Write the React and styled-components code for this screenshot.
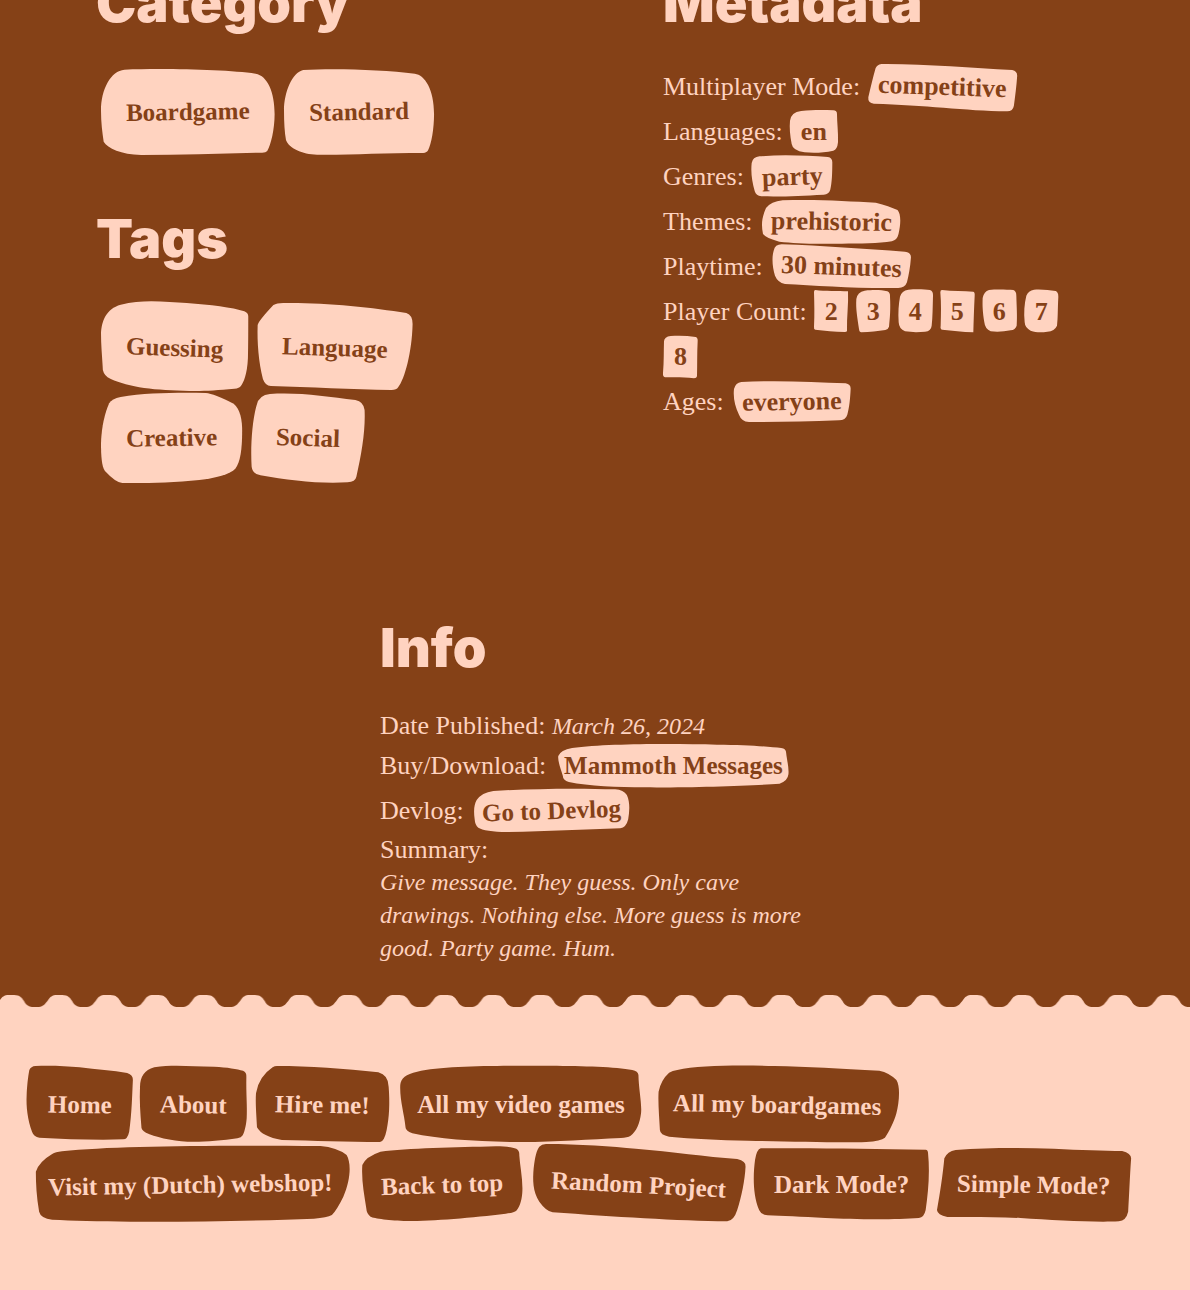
import React from "react";
import styled, { createGlobalStyle, ThemeProvider } from "styled-components";

const theme = {
  earth: "#854117",
  skin: "#ffd3c0",
  body: '"Liberation Serif", "Times New Roman", serif',
  display: 'Inter, "Liberation Sans", sans-serif',
};

const GlobalStyle = createGlobalStyle`
  *, *::before, *::after { box-sizing: border-box; }
  body {
    margin: 0;
    background: ${theme.skin};
    color: ${theme.skin};
    font-family: ${theme.body};
    font-size: 26px;
    line-height: 33px;
  }
  p { margin: 0; }
`;

/* Hand-cut stone outlines; each one stretches with the label it carries. */
const stones = {
  boardgame: ["0 -6 519 264", "M70 2 C190 -3 380 2 462 14 C498 20 519 70 519 135 C519 180 508 228 497 246 Q493 251 482 251 C360 253 240 258 120 258 C60 256 20 238 8 218 C4 190 0 160 0 125 C0 60 30 5 70 2Z"],
  standard: ["0 -6 453 264", "M58 3 C150 -3 300 2 395 14 C425 18 453 60 453 135 C453 180 445 225 435 244 Q432 251 420 252 C300 252 200 258 100 257 C55 256 15 238 6 213 C2 190 0 160 0 125 C0 70 25 10 58 3Z"],
  guessing: ["0 5 447 264", "M60 10 C130 -8 200 2 260 5 C330 10 400 18 435 30 Q447 35 447 45 C447 90 447 130 446 170 C444 220 432 245 425 253 Q420 261 405 262 C340 268 300 270 250 268 C150 267 70 255 20 228 Q4 216 5 195 C3 160 0 130 0 95 C2 60 15 22 60 10Z"],
  language: ["0 2 474 264", "M50 8 Q60 2 80 2 C200 0 350 15 455 32 Q474 38 474 65 C472 150 450 230 430 255 Q425 263 410 263 C290 262 160 254 42 251 Q25 250 18 230 C5 180 0 120 2 68 Q5 55 50 8Z"],
  creative: ["0 1 431 264", "M60 13 C140 0 230 0 320 1 Q345 3 405 33 C425 50 431 80 431 115 C431 170 425 210 410 228 C395 245 350 255 300 262 C220 270 130 272 65 271 Q45 270 12 235 C2 220 0 190 0 150 C2 100 12 60 25 32 Q33 18 60 13Z"],
  social: ["0 -1 360 264", "M60 2 C150 -4 240 10 330 20 Q356 25 359 50 C362 110 350 180 333 250 Q330 265 305 267 C220 272 120 262 30 246 Q5 242 2 220 C-2 160 4 80 18 35 Q25 5 60 2Z"],
  competitive: ["654 198 457 129", "M698 195 C830 194 970 207 1095 213 Q1110 216 1110 230 C1108 260 1104 290 1100 320 Q1097 337 1080 337 C950 335 830 318 675 314 Q656 312 658 295 C665 265 672 235 680 208 Q684 197 698 195Z"],
  en: ["422 333 142 129", "M455 336 C490 332 520 332 550 334 Q561 334 561 345 C561 370 565 400 564 430 Q562 452 550 455 C520 462 490 462 465 460 Q430 455 427 435 C422 410 420 385 422 365 Q425 340 455 336Z"],
  party: ["305 466 242 129", "M330 470 C400 464 470 468 530 472 Q543 474 543 488 C543 520 542 550 537 570 Q533 584 518 585 C450 588 400 592 335 590 Q320 588 316 575 C308 545 304 520 307 490 Q310 472 330 470Z"],
  prehistoric: ["332 598 429 129", "M400 599 C500 595 600 602 680 606 Q720 616 745 628 C756 640 755 670 748 700 Q744 718 728 722 C680 730 600 729 540 729 C480 730 430 727 390 723 Q350 712 341 700 C335 670 338 650 350 622 Q365 603 400 599Z"],
  minutes: ["365 73 428 129", "M400 71 C520 75 650 85 770 93 Q788 95 788 110 C786 140 781 165 776 185 Q770 202 750 202 C630 204 500 195 410 190 Q388 185 380 165 C372 140 370 110 376 90 Q380 71 400 71Z"],
  two: ["498 208 105 129", "M502 208 C530 212 570 210 600 212 C602 250 596 290 597 330 Q597 334 590 334 C560 334 530 330 502 327 Q497 326 498 318 C500 280 499 250 498 214 Q498 208 502 208Z"],
  three: ["624 208 105 129", "M650 210 C680 207 700 208 718 212 Q727 216 726 228 C728 265 726 290 723 318 Q720 327 712 328 C690 331 665 335 640 335 Q634 335 633 325 C628 290 623 265 625 235 Q628 214 650 210Z"],
  four: ["749 208 105 129", "M780 207 C805 205 830 206 845 208 Q855 212 854 225 C853 260 853 290 850 315 Q848 332 830 333 C810 335 790 335 770 332 Q752 325 751 305 C749 275 751 250 755 228 Q760 210 780 207Z"],
  five: ["878 208 105 129", "M884 208 C915 212 950 211 978 213 Q983 214 982 225 C980 265 979 300 978 335 C945 334 915 330 885 327 Q878 326 880 315 C881 280 882 250 879 215 Q879 208 884 208Z"],
  six: ["1004 208 105 129", "M1025 208 C1050 205 1080 207 1098 208 Q1107 211 1107 225 C1108 260 1110 285 1108 315 Q1104 327 1090 329 C1070 333 1050 335 1030 332 Q1013 325 1011 305 C1006 275 1005 255 1006 232 Q1010 212 1025 208Z"],
  seven: ["1130 208 105 129", "M1160 207 C1185 205 1205 209 1225 211 Q1233 214 1233 228 C1231 265 1232 290 1229 315 Q1222 331 1200 333 C1180 336 1165 335 1150 330 Q1133 322 1132 305 C1129 275 1131 250 1137 225 Q1143 210 1160 207Z"],
  eight: ["42 341 105 129", "M65 344 C90 343 115 343 140 347 Q147 349 146 360 C144 395 145 430 144 465 Q143 471 135 471 C105 467 80 468 48 468 Q41 466 42 455 C45 420 44 390 45 360 Q46 346 65 344Z"],
  everyone: ["231 476 365 129", "M262 482 C370 476 480 482 575 486 Q591 489 590 503 C589 530 586 560 580 580 Q575 597 555 597 C460 601 370 602 285 602 Q262 600 255 580 C243 555 237 530 240 503 Q245 484 262 482Z"],
  mammoth: ["582 404 731 129", "M640 416 C750 402 950 403 1080 406 C1170 406 1240 412 1275 416 Q1290 418 1290 430 C1292 450 1299 475 1297 495 Q1295 515 1270 523 C1180 530 1000 535 860 534 C780 534 690 530 630 518 Q612 512 612 500 C606 480 596 455 598 440 Q605 422 640 416Z"],
  devlog: ["323 539 482 129", "M390 545 C500 538 640 536 755 540 Q780 542 790 557 C800 580 798 605 794 630 Q788 655 770 657 C660 660 550 667 430 668 C390 668 355 662 345 655 Q335 648 334 630 C330 600 333 585 340 572 Q355 550 390 545Z"],
  home: ["86 258 310 228", "M108 258 C150 256 200 258 240 262 C290 268 340 272 382 279 Q400 285 399 300 C397 340 396 400 388 455 Q383 478 370 478 C290 481 200 477 120 473 Q103 470 98 455 C85 420 80 380 82 345 C83 320 86 290 90 270 Q95 259 108 258Z"],
  about: ["417 258 321 228", "M460 262 C520 253 570 260 640 260 C680 262 710 267 727 272 Q738 277 737 290 C736 340 740 380 738 415 C736 440 730 460 726 466 Q722 473 710 475 C660 482 600 487 560 485 C510 482 460 470 435 458 Q420 450 421 438 C418 400 415 360 417 320 C418 290 430 270 460 262Z"],
  hire: ["759 258 405 228", "M825 258 C920 258 1030 266 1130 277 Q1160 285 1161 320 C1165 370 1163 410 1155 450 Q1148 485 1135 486 C1040 486 930 482 840 480 Q780 470 765 442 C763 400 760 370 762 340 Q770 290 812 262 Q818 258 825 258Z"],
  video: ["48 48 760 228", "M110 65 C200 45 400 48 520 47 C620 48 720 50 770 60 Q788 63 789 75 C790 120 800 160 797 190 C793 220 783 245 765 257 Q755 263 735 264 C640 268 540 276 430 276 C300 276 180 268 95 250 Q73 242 74 230 C70 190 56 150 58 105 C60 85 75 72 110 65Z"],
  boardgames: ["831 48 756 228", "M905 60 C970 45 1100 45 1200 48 C1300 50 1400 56 1520 62 Q1550 68 1572 90 C1585 110 1580 160 1572 190 C1565 215 1550 245 1537 263 Q1525 273 1480 276 C1400 279 1250 274 1120 272 C1030 270 950 266 880 260 Q853 255 852 240 C850 200 846 160 848 125 Q855 90 880 68 Q890 62 905 60Z"],
  webshop: ["86 498 992 228", "M190 514 C350 498 600 496 980 498 Q1030 502 1060 525 C1075 550 1072 600 1050 650 Q1030 690 1015 705 Q1000 713 960 716 C800 722 600 726 400 725 C300 724 220 722 160 719 Q125 715 120 695 C112 650 110 610 110 575 Q120 545 160 522 Q170 516 190 514Z"],
  back: ["-39 288 492 228", "M20 305 C100 295 250 292 370 289 C400 289 420 292 432 296 Q442 302 441 315 C443 350 453 390 450 430 C448 455 440 475 432 482 Q425 488 400 491 C300 503 180 513 100 513 C50 512 0 505 -10 500 Q-22 492 -23 475 C-30 430 -38 390 -35 345 Q-25 320 20 305Z"],
  random: ["475 288 647 228", "M520 282 C620 282 720 290 790 296 C900 305 1000 320 1095 327 Q1122 333 1120 350 C1118 390 1108 440 1095 480 Q1085 512 1065 514 C920 513 720 500 540 487 Q520 483 500 455 C480 425 480 390 483 355 C487 320 492 300 500 290 Q507 282 520 282Z"],
  dark: ["10 288 516 228", "M30 295 C200 293 350 297 515 299 Q522 300 522 310 C528 370 522 430 515 480 Q510 503 495 504 C420 510 300 508 220 504 C150 500 90 498 50 496 Q30 493 25 480 C5 430 8 370 13 330 Q18 298 30 295Z"],
  simple: ["549 288 581 228", "M605 300 C700 293 800 293 900 296 C980 300 1050 302 1105 303 Q1132 310 1132 325 C1128 380 1126 440 1123 485 Q1117 512 1095 514 C1020 518 900 510 800 504 C720 500 640 501 580 501 Q550 495 549 480 C558 430 567 370 571 325 Q580 304 605 300Z"],
};

const Page = styled.div`
  display: flex;
  flex-direction: column;
  min-height: 100vh;
`;

const Main = styled.main`
  flex: 0 0 auto;
  display: flex;
  flex-direction: column;
  gap: 139px;
  margin-top: -23px;
  padding: 0 96px 29px;
  background: ${(p) => p.theme.earth};

  @media (max-width: 700px) {
    padding-inline: 24px;
    gap: 56px;
  }
`;

const Columns = styled.div`
  display: grid;
  grid-template-columns: repeat(2, minmax(0, 431px));
  justify-content: space-between;
  gap: 56px;

  @media (max-width: 1000px) {
    grid-template-columns: minmax(0, 431px);
    justify-content: center;
  }
`;

const Column = styled.div`
  display: flex;
  flex-direction: column;
  gap: 56px;
`;

const Section = styled.section`
  width: 100%;
  max-width: 430px;
  align-self: ${(p) => (p.$centered ? "center" : "auto")};
`;

const Heading = styled.h2`
  margin: 0 0 35px;
  font-family: ${(p) => p.theme.display};
  font-size: 54px;
  font-weight: 900;
  line-height: 52px;
`;

const StoneWall = styled.div`
  display: flex;
  flex-wrap: wrap;
  gap: 2px 9px;
  padding: 3px 5px 2px;
`;

const Row = styled.div`
  display: flex;
  flex-wrap: wrap;
  align-items: center;
  column-gap: 7px;
  line-height: 45px;
`;

const sizes = {
  large: { height: 88, pad: 25, font: 25 },
  medium: { height: 76, pad: 20, font: 25 },
  small: { height: 43, pad: 11, font: 25 },
  chip: { height: 43, pad: 11, font: 26 },
};

const StoneBox = styled.span`
  position: relative;
  display: inline-flex;
  align-items: center;
  justify-content: center;
  height: ${(p) => sizes[p.$size].height}px;
  margin: ${(p) => (sizes[p.$size].height === 43 ? "1px 0" : "0")};
  padding: 0 ${(p) => sizes[p.$size].pad}px;
  border: 0;
  background: none;
  color: ${(p) => (p.$dark ? p.theme.skin : p.theme.earth)};
  font-family: inherit;
  font-size: ${(p) => sizes[p.$size].font}px;
  font-weight: 700;
  line-height: 33px;
  text-decoration: none;
  white-space: nowrap;
`;

const Outline = styled.svg`
  position: absolute;
  inset: 0;
  width: 100%;
  height: 100%;
  overflow: visible;
  fill: ${(p) => (p.$dark ? p.theme.earth : p.theme.skin)};
`;

const Label = styled.span`
  position: relative;
  transform: rotate(${(p) => p.$tilt}deg);
`;

function Stone({ shape, tilt = 0, size = "chip", dark = false, as = "span", href, children }) {
  const [viewBox, d] = stones[shape];
  const extra = as === "a" ? { href } : as === "button" ? { type: "button" } : {};
  return (
    <StoneBox as={as} $size={size} $dark={dark} {...extra}>
      <Outline $dark={dark} viewBox={viewBox} preserveAspectRatio="none" aria-hidden="true">
        <path d={d} />
      </Outline>
      <Label $tilt={tilt}>{children}</Label>
    </StoneBox>
  );
}

const Emphasis = styled.em`
  font-size: 24px;
`;

const Summary = styled.p`
  font-size: 24px;
  font-style: italic;
`;

const WaveEdge = styled.svg`
  display: block;
  width: 100%;
  height: 14px;
  background: ${(p) => p.theme.earth};
`;

const Footer = styled.footer`
  background: ${(p) => p.theme.skin};
`;

const FooterNav = styled.nav`
  display: flex;
  flex-wrap: wrap;
  gap: 4px 8px;
  padding: 58px 28px 68px;
`;

function Waves() {
  return (
    <WaveEdge aria-hidden="true">
      <defs>
        <pattern id="waves" width="48.15" height="14" patternUnits="userSpaceOnUse">
          <path
            fill={theme.skin}
            d="M0 6 C2 3 4 1 9 1 L14 1 C20 1 22 4 24 7 C26 11 29 13 34 13 L39 13 C43 13 46 9 48.15 6 L48.15 14 L0 14Z"
          />
        </pattern>
      </defs>
      <rect width="100%" height="14" fill="url(#waves)" />
    </WaveEdge>
  );
}

const categories = [
  ["Boardgame", "boardgame", -1],
  ["Standard", "standard", -1],
];

const tags = [
  ["Guessing", "guessing", 2],
  ["Language", "language", 2],
  ["Creative", "creative", -1],
  ["Social", "social", 2],
];

const metadata = [
  ["Multiplayer Mode:", [["competitive", "competitive", 2]]],
  ["Languages:", [["en", "en", 0]]],
  ["Genres:", [["party", "party", -2]]],
  ["Themes:", [["prehistoric", "prehistoric", 1]]],
  ["Playtime:", [["30 minutes", "minutes", 2]]],
  [
    "Player Count:",
    [
      ["2", "two", 0],
      ["3", "three", 0],
      ["4", "four", 0],
      ["5", "five", 0],
      ["6", "six", 0],
      ["7", "seven", 0],
      ["8", "eight", 0],
    ],
  ],
  ["Ages:", [["everyone", "everyone", -1]]],
];

const footerItems = [
  ["Home", "home", 1, "a"],
  ["About", "about", 1, "a"],
  ["Hire me!", "hire", 1, "a"],
  ["All my video games", "video", 0, "a"],
  ["All my boardgames", "boardgames", 1, "a"],
  ["Visit my (Dutch) webshop!", "webshop", -1, "a"],
  ["Back to top", "back", -2, "a"],
  ["Random Project", "random", 3, "a"],
  ["Dark Mode?", "dark", 0, "button"],
  ["Simple Mode?", "simple", 1, "button"],
];

function LinkWall({ items }) {
  return (
    <StoneWall>
      {items.map(([text, shape, tilt]) => (
        <Stone key={text} as="a" href={`#${shape}`} size="large" shape={shape} tilt={tilt}>
          {text}
        </Stone>
      ))}
    </StoneWall>
  );
}

export default function App() {
  return (
    <ThemeProvider theme={theme}>
      <GlobalStyle />
      <Page>
        <Main>
          <Columns>
            <Column>
              <Section>
                <Heading>Category</Heading>
                <LinkWall items={categories} />
              </Section>
              <Section>
                <Heading>Tags</Heading>
                <LinkWall items={tags} />
              </Section>
            </Column>
            <Section>
              <Heading>Metadata</Heading>
              {metadata.map(([label, values]) => (
                <Row key={label}>
                  <span>{label}</span>
                  {values.map(([text, shape, tilt]) => (
                    <Stone key={text} shape={shape} tilt={tilt}>
                      {text}
                    </Stone>
                  ))}
                </Row>
              ))}
            </Section>
          </Columns>
          <Section $centered>
            <Heading>Info</Heading>
            <p>
              Date Published: <Emphasis>March 26, 2024</Emphasis>
            </p>
            <Row>
              <span>Buy/Download:</span>
              <Stone as="a" href="#mammoth-messages" size="small" shape="mammoth">
                Mammoth Messages
              </Stone>
            </Row>
            <Row>
              <span>Devlog:</span>
              <Stone as="a" href="#devlog" size="small" shape="devlog" tilt={-2}>
                Go to Devlog
              </Stone>
            </Row>
            <p>Summary:</p>
            <Summary>
              Give message. They guess. Only cave drawings. Nothing else. More guess is more good.
              Party game. Hum.
            </Summary>
          </Section>
        </Main>
        <Footer>
          <Waves />
          <FooterNav>
            {footerItems.map(([text, shape, tilt, as]) => (
              <Stone key={text} as={as} href={`#${shape}`} size="medium" shape={shape} tilt={tilt} dark>
                {text}
              </Stone>
            ))}
          </FooterNav>
        </Footer>
      </Page>
    </ThemeProvider>
  );
}
